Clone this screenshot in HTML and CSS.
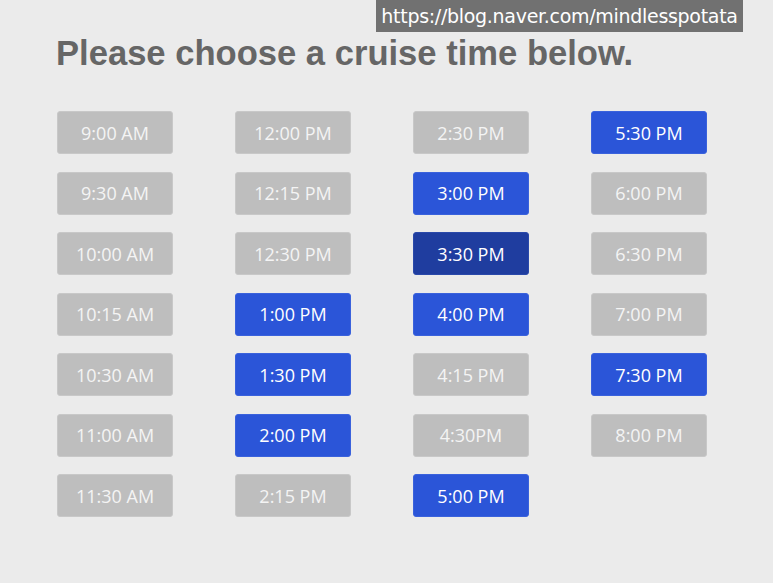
FILE: index.html
```html
<!DOCTYPE html>
<html>
<head>
<meta charset="utf-8">
<link rel="stylesheet" href="styles.css">
</head>
<body>
<div class="watermark">https://blog.naver.com/mindlesspotata</div>
<h1 class="title">Please choose a cruise time below.</h1>
<div class="grid">
  <div class="col">
    <div class="btn">9:00 AM</div>
    <div class="btn">9:30 AM</div>
    <div class="btn">10:00 AM</div>
    <div class="btn">10:15 AM</div>
    <div class="btn">10:30 AM</div>
    <div class="btn">11:00 AM</div>
    <div class="btn">11:30 AM</div>
  </div>
  <div class="col">
    <div class="btn">12:00 PM</div>
    <div class="btn">12:15 PM</div>
    <div class="btn">12:30 PM</div>
    <div class="btn on">1:00 PM</div>
    <div class="btn on">1:30 PM</div>
    <div class="btn on">2:00 PM</div>
    <div class="btn">2:15 PM</div>
  </div>
  <div class="col">
    <div class="btn">2:30 PM</div>
    <div class="btn on">3:00 PM</div>
    <div class="btn sel">3:30 PM</div>
    <div class="btn on">4:00 PM</div>
    <div class="btn">4:15 PM</div>
    <div class="btn">4:30PM</div>
    <div class="btn on">5:00 PM</div>
  </div>
  <div class="col">
    <div class="btn on">5:30 PM</div>
    <div class="btn">6:00 PM</div>
    <div class="btn">6:30 PM</div>
    <div class="btn">7:00 PM</div>
    <div class="btn on">7:30 PM</div>
    <div class="btn">8:00 PM</div>
  </div>
</div>
</body>
</html>
```
FILE: styles.css
```css
html, body {
  margin: 0;
  padding: 0;
  background: #ebebeb;
}
body {
  position: relative;
  width: 773px;
  height: 583px;
  overflow: hidden;
}
.watermark {
  position: absolute;
  top: 0;
  left: 376px;
  width: 367px;
  height: 32px;
  background: #717171;
  color: #ffffff;
  font-family: "DejaVu Sans", sans-serif;
  font-size: 19px;
  line-height: 32px;
  text-align: center;
  letter-spacing: -0.3px;
}
.title {
  margin: 0;
  padding: 33px 0 0 56px;
  font-family: "Liberation Sans", Arial, sans-serif;
  font-weight: bold;
  font-size: 34.6px;
  line-height: 40px;
  color: #666666;
}
.grid {
  display: flex;
  gap: 62px;
  padding: 38px 0 0 57px;
}
.col {
  display: flex;
  flex-direction: column;
  gap: 17.5px;
  width: 116px;
}
.btn {
  height: 43px;
  box-sizing: border-box;
  border-radius: 3px;
  background: #bebebe;
  border: 1px solid #c8c8c8;
  color: #f4f4f4;
  font-family: "Open Sans", Lato, sans-serif;
  font-size: 18px;
  font-weight: 500;
  display: flex;
  align-items: center;
  justify-content: center;
}
.btn.on {
  background: #2b55d8;
  border-color: #3a62dc;
  color: #ffffff;
}
.btn.sel {
  background: #1f3d9f;
  border-color: #2a49aa;
  color: #ffffff;
}
```
